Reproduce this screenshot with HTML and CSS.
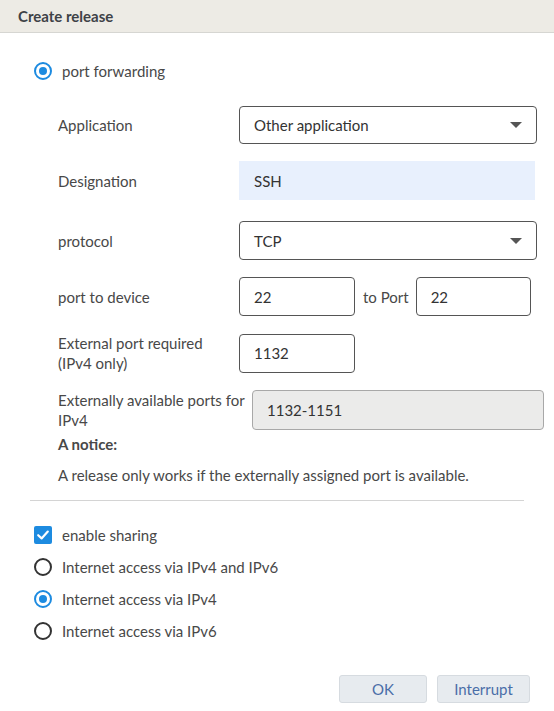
FILE: index.html
```html
<!DOCTYPE html>
<html>
<head>
<meta charset="utf-8">
<link rel="stylesheet" href="styles.css">
</head>
<body>
<div class="dialog">
  <div class="head">Create release</div>
  <div class="content">
    <label class="opt top-opt"><span class="radio on"></span><span>port forwarding</span></label>
    <div class="form">
      <div class="row r-app">
        <div class="lbl">Application</div>
        <div class="select wide"><span>Other application</span><span class="caret"></span></div>
      </div>
      <div class="row r-name">
        <div class="lbl">Designation</div>
        <div class="input filled wide">SSH</div>
      </div>
      <div class="row r-proto">
        <div class="lbl">protocol</div>
        <div class="select wide"><span>TCP</span><span class="caret"></span></div>
      </div>
      <div class="row r-port">
        <div class="lbl">port to device</div>
        <div class="input small">22</div>
        <div class="to">to Port</div>
        <div class="input small">22</div>
      </div>
      <div class="row r-ext">
        <div class="lbl two">External port required<br>(IPv4 only)</div>
        <div class="input small">1132</div>
      </div>
      <div class="row r-avail">
        <div class="lbl two avail-lbl">Externally available ports for IPv4</div>
        <div class="input disabled">1132-1151</div>
      </div>
      <div class="notice-title">A notice:</div>
      <div class="notice">A release only works if the externally assigned port is available.</div>
    </div>
    <div class="sep"></div>
    <div class="opts">
      <label class="opt"><span class="check"><svg width="14" height="14" viewBox="0 0 14 14"><path d="M2.2 7.2 L5.6 10.4 L11.8 3.6" fill="none" stroke="#fff" stroke-width="2.2" stroke-linecap="round" stroke-linejoin="round"/></svg></span><span>enable sharing</span></label>
      <label class="opt"><span class="radio"></span><span>Internet access via IPv4 and IPv6</span></label>
      <label class="opt"><span class="radio on"></span><span>Internet access via IPv4</span></label>
      <label class="opt"><span class="radio"></span><span>Internet access via IPv6</span></label>
    </div>
    <div class="buttons">
      <button class="btn ok">OK</button>
      <button class="btn cancel">Interrupt</button>
    </div>
  </div>
</div>
</body>
</html>
```
FILE: styles.css
```css
html, body {
  margin: 0;
  padding: 0;
  background: #fff;
}
body {
  font-family: "Lato", "Open Sans", sans-serif;
  font-size: 15px;
  color: #484848;
  width: 554px;
  height: 711px;
  overflow: hidden;
}
.head {
  height: 32px;
  line-height: 32px;
  background: #edebe5;
  border-bottom: 1px solid #d6d6d2;
  padding-left: 18px;
  font-weight: 700;
  color: #3e4247;
  font-size: 15px;
}
.content {
  padding: 0 0 0 30px;
}
.opt {
  display: flex;
  align-items: center;
  height: 24px;
  color: #484848;
}
.top-opt {
  margin-top: 26px;
  margin-left: 4px;
}
.radio {
  box-sizing: border-box;
  width: 18px;
  height: 18px;
  border-radius: 50%;
  border: 2px solid #333;
  margin-right: 10px;
  position: relative;
  flex: none;
}
.radio.on {
  border-color: #1d8be0;
}
.radio.on::after {
  content: "";
  position: absolute;
  left: 3px;
  top: 3px;
  width: 8px;
  height: 8px;
  border-radius: 50%;
  background: #1d8be0;
}
.form {
  padding-left: 28px;
  margin-top: 23px;
}
.row {
  display: flex;
  align-items: center;
}
.lbl {
  width: 181px;
  flex: none;
  line-height: 20px;
}
.r-app { margin-top: 0; }
.r-name { margin-top: 17px; }
.r-proto { margin-top: 21px; }
.r-port { margin-top: 17px; }
.r-ext { margin-top: 17px; }
.r-avail { margin-top: 17px; align-items: flex-start; }
.avail-lbl { width: 194px; }
.select, .input {
  box-sizing: border-box;
  height: 39px;
  border: 1px solid #555;
  border-radius: 4px;
  display: flex;
  align-items: center;
  padding: 0 14px;
  color: #333;
}
.wide { width: 298px; }
.select { justify-content: space-between; height: 38px; }
.r-proto .select { height: 39px; }
.caret {
  width: 0;
  height: 0;
  border-left: 6px solid transparent;
  border-right: 6px solid transparent;
  border-top: 6px solid #555;
}
.input.filled {
  background: #e8f0fd;
  border-color: #e8f0fd;
  border-radius: 0;
  width: 296px;
}
.input.small { width: 116px; }
.to {
  margin: 0 7px 0 8px;
}
.r-port .input.small:last-child { width: 115px; }
.input.disabled {
  width: 292px;
  height: 40px;
  background: #ebebea;
  border-color: #a8a8a8;
}
.notice-title {
  font-weight: 700;
  margin-top: 4px;
  line-height: 20px;
}
.notice {
  margin-top: 11px;
  line-height: 20px;
}
.sep {
  width: 494px;
  height: 1px;
  background: #d4d4d4;
  margin-top: 15px;
}
.opts {
  margin-top: 22px;
  display: flex;
  flex-direction: column;
  gap: 8px;
  margin-left: 4px;
}
.check {
  width: 18px;
  height: 18px;
  border-radius: 2px;
  background: #1d8be0;
  margin-right: 10px;
  display: flex;
  align-items: center;
  justify-content: center;
  flex: none;
}
.buttons {
  display: flex;
  justify-content: flex-end;
  gap: 10px;
  margin-top: 32px;
  padding-right: 24px;
}
.btn {
  height: 28px;
  border: 1px solid #d6dbe0;
  background: #e7ebef;
  border-radius: 3px;
  font-family: inherit;
  font-size: 15px;
  color: #4a6ea8;
  padding: 0;
}
.ok { width: 88px; }
.cancel { width: 93px; }
```
